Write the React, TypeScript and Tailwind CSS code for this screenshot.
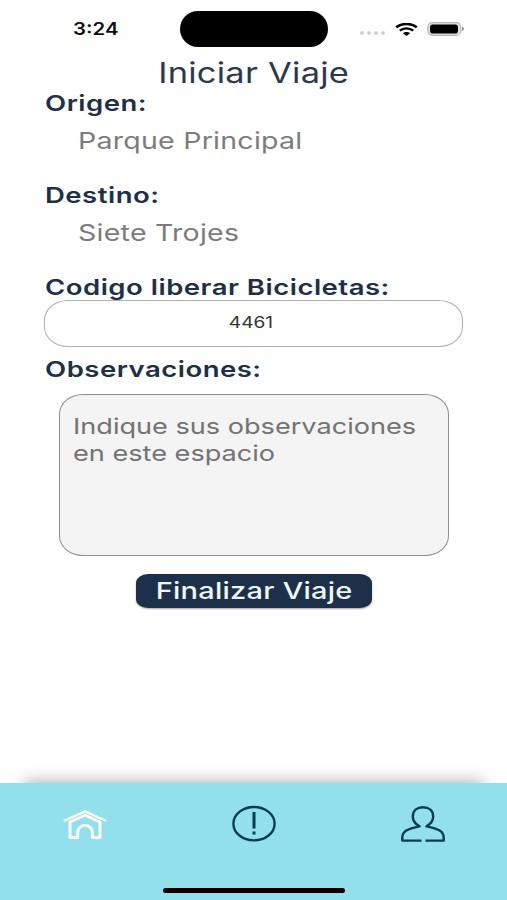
import type { ReactNode } from "react";
import clsx from "clsx";

function Label({ className, children }: { className?: string; children: ReactNode }) {
  return (
    <h2 className={clsx("flex h-7 items-center text-[22px] font-semibold text-[#1d3048]", className)}>
      <span className="origin-left scale-x-[1.25] whitespace-nowrap tracking-[0.4px]">{children}</span>
    </h2>
  );
}

function Value({ children }: { children: ReactNode }) {
  return (
    <p className="flex h-8 items-center pl-[33px] text-[23px] text-[#7c7c7c]">
      <span className="origin-left scale-x-[1.24] whitespace-nowrap tracking-[0.2px]">{children}</span>
    </p>
  );
}

function StatusBar() {
  return (
    <header className="flex h-[58px] items-center pl-[73px]">
      <div className="w-[107px] pt-0.5 text-[17px] font-semibold text-[#111]">
        <span className="inline-block origin-left scale-x-[1.2]">3:24</span>
      </div>
      <div className="h-9 w-[148px] rounded-full bg-black" />
      <div className="ml-8 mt-2 flex gap-[3px]">
        <i className="h-1 w-[4px] rounded-full bg-[#cfcfcf]" />
        <i className="h-1 w-[4px] rounded-full bg-[#cfcfcf]" />
        <i className="h-1 w-[4px] rounded-full bg-[#cfcfcf]" />
        <i className="h-1 w-[4px] rounded-full bg-[#cfcfcf]" />
      </div>
      <svg className="ml-[9.5px] h-[13px] w-[23px]" viewBox="0 0 23 14" preserveAspectRatio="none" fill="none">
        <path d="M1.2 4.600C7-.2 16-.2 21.800 4.600" stroke="#000" strokeWidth="2.700" />
        <path d="M4.800 8.300c3.800-3.400 9.600-3.400 13.400 0" stroke="#000" strokeWidth="2.600" />
        <path d="M7.900 11.100c1.900-1.900 5.300-1.900 7.200 0L11.500 14z" fill="#000" />
      </svg>
      <svg className="ml-[9px] h-[14px] w-[38px]" viewBox="0 0 38 14" fill="none">
        <rect x=".8" y=".6" width="33" height="12.800" rx="4.500" fill="#e4e4e4" stroke="#b8b8b8" strokeWidth="1.200" />
        <rect x="3" y="2.400" width="28" height="9.200" rx="2.800" fill="#000" />
        <path d="M35 5v4c1.400-.4 2-1.100 2-2s-.6-1.600-2-2z" fill="#999" />
      </svg>
    </header>
  );
}

function TabBar() {
  return (
    <div className="relative mt-auto h-[117px]">
      {/* soft shadow above the bar */}
      <div className="absolute inset-x-[28px] top-1 h-8 shadow-[0_-2px_16px_4px_rgba(0,0,0,0.3)]" />
      <nav className="relative flex h-full flex-col items-center justify-between bg-[#92e0eb]">
        <div className="grid w-full grid-cols-3 justify-items-center pt-[21px]">
          <svg className="h-10 w-[50px]" viewBox="0 0 50 40" fill="none" stroke="#fff">
            <path d="M3.800 17 25 7.300 46.200 17" strokeWidth="2.400" />
            <path
              d="M10 18v15.500h7.700v-5.300a7.300 6.800 0 0 1 14.600 0v5.300H40V18L25 11.300z"
              strokeWidth="2.900"
              strokeLinejoin="round"
            />
          </svg>
          <svg className="h-10 w-[50px]" viewBox="0 0 50 40" fill="none" stroke="#063b54">
            <ellipse cx="25" cy="19.700" rx="20.600" ry="16.700" strokeWidth="2.400" />
            <path d="M25 8v16.500M25 27.600v2.800" strokeWidth="3" />
          </svg>
          <svg className="h-10 w-[50px]" viewBox="0 0 50 40" fill="none" stroke="#063b54">
            <path
              d="M23.500 36.600H4.300v-3c0-6.300 5-8.800 17.200-11.200C17 19.800 14.800 16.500 14.800 12.500 14.800 6.500 19 3.200 25 3.200s10.200 3.300 10.200 9.300c0 4-2.200 7.300-6.700 9.900 12.200 2.400 17.200 4.900 17.200 11.200v3H27.500"
              strokeWidth="2.400"
              strokeLinejoin="round"
            />
          </svg>
        </div>
        <div className="mb-[7px] h-[5px] w-[182px] rounded-full bg-black" />
      </nav>
    </div>
  );
}

export default function App() {
  return (
    <div className="flex h-[900px] w-full flex-col overflow-hidden bg-white font-['Inter',sans-serif]">
      <StatusBar />
      <main className="flex flex-col px-[45px]">
        <h1 className="flex h-[30px] items-center justify-center text-[28px] text-[#2b394c]">
          <span className="scale-x-[1.23] whitespace-nowrap tracking-[0.2px]">Iniciar Viaje</span>
        </h1>
        <Label className="mt-px">Origen:</Label>
        <div className="mt-2">
          <Value>Parque Principal</Value>
        </div>
        <Label className="mt-6">Destino:</Label>
        <div className="mt-2">
          <Value>Siete Trojes</Value>
        </div>
        <Label className="mt-6">Codigo liberar Bicicletas:</Label>
        <div className="-ml-px -mt-px flex h-[47px] w-[419px] items-center justify-center rounded-[24px/20px] border border-[#b0b0b0] pb-0.5 pr-[5px] text-[15.5px] text-[#333]">
          <span className="scale-x-[1.23]">4461</span>
        </div>
        <Label className="mt-2">Observaciones:</Label>
        <div className="ml-3.5 mt-[11px] h-[162px] w-[390px] rounded-[24px/20px] border border-[#8f8f8f] bg-[#f4f4f4] pl-[13px] pt-[18px] text-[22px] leading-[27px] text-[#737373]">
          <p className="origin-left scale-x-[1.232] whitespace-nowrap">
            Indique sus observaciones
            <br />
            en este espacio
          </p>
        </div>
        <button className="ml-[91px] mt-[18px] flex h-[34px] w-[236px] items-center justify-center rounded-[12px/9px] bg-[#1d3049] text-[23px] font-medium text-[#eef6fb] shadow-[0_1px_2px_rgba(0,0,0,0.35)]">
          <span className="scale-x-[1.26] whitespace-nowrap tracking-[0.2px]">Finalizar Viaje</span>
        </button>
      </main>
      <TabBar />
    </div>
  );
}
